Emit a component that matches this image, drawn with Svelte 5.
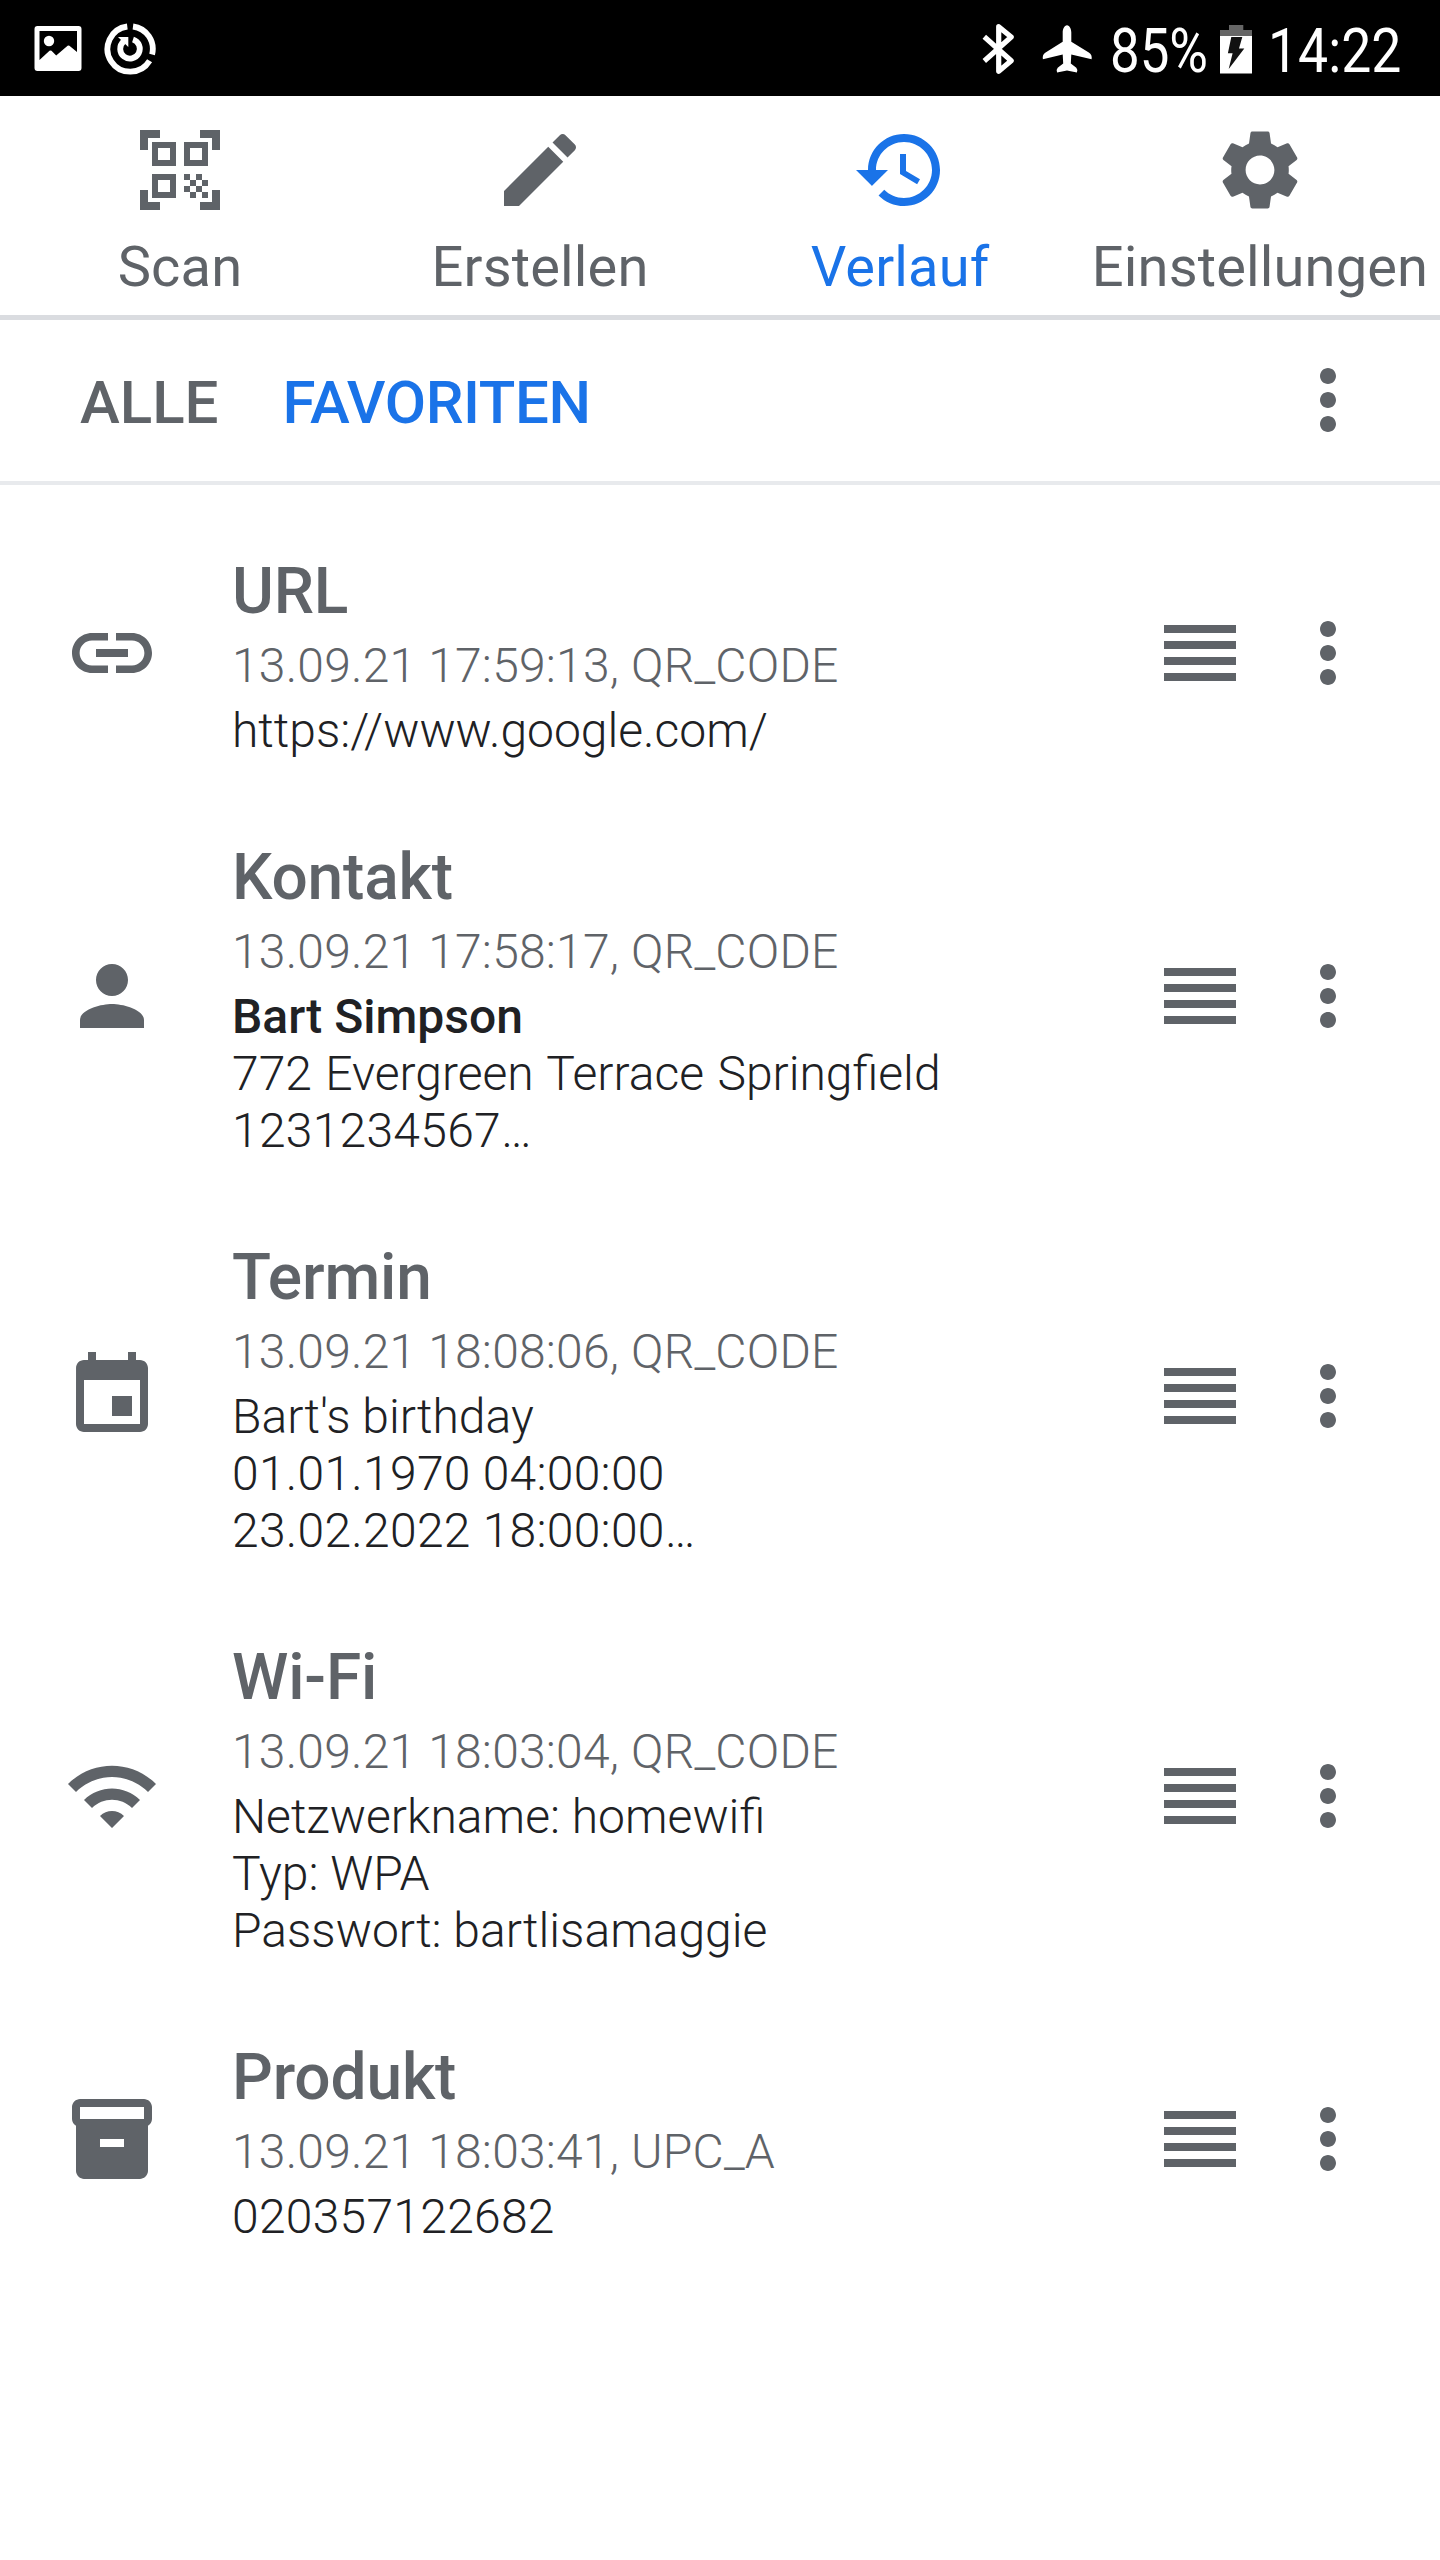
<script>
  const icons = {
    scan: 'M2 2h5v2H4v3H2zM17 2h5v5h-2V4h-3zM2 17h2v3h3v2H2zM20 17h2v5h-5v-2h3zM5 5h6v6H5zM6.5 6.5v3h3v-3zM13 5h6v6h-6zM14.5 6.5v3h3v-3zM5 13h6v6H5zM6.5 14.5v3h3v-3zM13 13h1.5v1.5H13zM16 13h1.5v1.5H16zM14.5 14.5H16V16h-1.5zM17.5 14.5H19V16h-1.5zM13 16h1.5v1.5H13zM16 16h1.5v1.5H16zM14.5 17.5H16V19h-1.5zM17.5 17.5H19V19h-1.5z',
    edit: 'M3 17.25V21h3.75L17.81 9.94l-3.75-3.75L3 17.25zM20.71 7.04c.39-.39.39-1.02 0-1.41l-2.34-2.34c-.39-.39-1.02-.39-1.41 0l-1.83 1.83 3.75 3.75 1.83-1.83z',
    history: 'M13 3c-4.97 0-9 4.03-9 9H1l3.89 3.89.07.14L9 12H6c0-3.87 3.13-7 7-7s7 3.13 7 7-3.13 7-7 7c-1.93 0-3.68-.79-4.94-2.06l-1.42 1.42C8.27 19.99 10.51 21 13 21c4.97 0 9-4.03 9-9s-4.03-9-9-9zm-1 5v5l4.28 2.54.72-1.21-3.5-2.08V8H12z',
    settings: 'M19.14 12.94c.04-.3.06-.61.06-.94 0-.32-.02-.64-.07-.94l2.03-1.58c.18-.14.23-.41.12-.61l-1.92-3.32c-.12-.22-.37-.29-.59-.22l-2.39.96c-.5-.38-1.03-.7-1.62-.94l-.36-2.54c-.04-.24-.24-.41-.48-.41h-3.84c-.24 0-.43.17-.47.41l-.36 2.54c-.59.24-1.13.57-1.62.94l-2.39-.96c-.22-.08-.47 0-.59.22L2.74 8.87c-.12.21-.08.47.12.61l2.03 1.58c-.05.3-.09.63-.09.94s.02.64.07.94l-2.03 1.58c-.18.14-.23.41-.12.61l1.92 3.32c.12.22.37.29.59.22l2.39-.96c.5.38 1.03.7 1.62.94l.36 2.54c.05.24.24.41.48.41h3.84c.24 0 .44-.17.47-.41l.36-2.54c.59-.24 1.13-.56 1.62-.94l2.39.96c.22.08.47 0 .59-.22l1.92-3.32c.12-.22.07-.47-.12-.61l-2.01-1.58zM12 15.6c-1.98 0-3.6-1.62-3.6-3.6s1.62-3.6 3.6-3.6 3.6 1.62 3.6 3.6-1.62 3.6-3.6 3.6z',
    link: 'M3.9 12c0-1.71 1.39-3.1 3.1-3.1h4V7H7c-2.76 0-5 2.24-5 5s2.24 5 5 5h4v-1.9H7c-1.71 0-3.1-1.39-3.1-3.1zM8 13h8v-2H8v2zm9-6h-4v1.9h4c1.71 0 3.1 1.39 3.1 3.1s-1.39 3.1-3.1 3.1h-4V17h4c2.76 0 5-2.24 5-5s-2.24-5-5-5z',
    person: 'M12 12c2.21 0 4-1.79 4-4s-1.79-4-4-4-4 1.79-4 4 1.79 4 4 4zm0 2c-2.67 0-8 1.34-8 4v2h16v-2c0-2.66-5.33-4-8-4z',
    event: 'M17 12h-5v5h5v-5zM16 1v2H8V1H6v2H5c-1.11 0-1.99.9-1.99 2L3 19c0 1.1.89 2 2 2h14c1.1 0 2-.9 2-2V5c0-1.1-.9-2-2-2h-1V1h-2zm3 18H5V8h14v11z',
    wifi: 'M1 9l2 2c4.97-4.97 13.03-4.97 18 0l2-2C16.93 2.93 7.08 2.93 1 9zm8 8l3 3 3-3c-1.65-1.66-4.34-1.66-6 0zm-4-4l2 2c2.76-2.76 7.24-2.76 10 0l2-2C15.14 9.14 8.87 9.14 5 13z',
    product: 'M20 2H4c-1 0-2 .9-2 2v3.01c0 .72.43 1.34 1 1.69V20c0 1.1 1.1 2 2 2h14c.9 0 2-.9 2-2V8.7c.57-.35 1-.97 1-1.69V4c0-1.1-1-2-2-2zm-5 12H9v-2h6v2zm5-7H4V4h16v3z',
    handle: 'M3 5h18v2H3zM3 9h18v2H3zM3 13h18v2H3zM3 17h18v2H3z',
    more: 'M12 8c1.1 0 2-.9 2-2s-.9-2-2-2-2 .9-2 2 .9 2 2 2zm0 2c-1.1 0-2 .9-2 2s.9 2 2 2 2-.9 2-2-.9-2-2-2zm0 6c-1.1 0-2 .9-2 2s.9 2 2 2 2-.9 2-2-.9-2-2-2z',
  };

  const tabs = [
    { label: 'Scan', icon: 'scan' },
    { label: 'Erstellen', icon: 'edit' },
    { label: 'Verlauf', icon: 'history', active: true },
    { label: 'Einstellungen', icon: 'settings' },
  ];

  const entries = [
    { icon: 'link', title: 'URL', meta: '13.09.21 17:59:13, QR_CODE', lines: ['https://www.google.com/'] },
    {
      icon: 'person',
      title: 'Kontakt',
      meta: '13.09.21 17:58:17, QR_CODE',
      name: 'Bart Simpson',
      lines: ['772 Evergreen Terrace Springfield', '1231234567…'],
    },
    {
      icon: 'event',
      title: 'Termin',
      meta: '13.09.21 18:08:06, QR_CODE',
      lines: ["Bart's birthday", '01.01.1970 04:00:00', '23.02.2022 18:00:00…'],
    },
    {
      icon: 'wifi',
      title: 'Wi-Fi',
      meta: '13.09.21 18:03:04, QR_CODE',
      lines: ['Netzwerkname: homewifi', 'Typ: WPA', 'Passwort: bartlisamaggie'],
    },
    { icon: 'product', title: 'Produkt', meta: '13.09.21 18:03:41, UPC_A', lines: ['020357122682'] },
  ];

  const isNumeric = (line) => !/[a-z]/i.test(line);
  const isAddress = (line) => /^\d+ [a-z]/i.test(line);
</script>

{#snippet icon(name)}
  <svg class="icon" viewBox="0 0 24 24" aria-hidden="true"><path fill-rule="evenodd" d={icons[name]} /></svg>
{/snippet}

<div class="screen">
  <header class="status">
    <svg class="picture" viewBox="34 23 49 52" aria-hidden="true">
      <path fill-rule="evenodd" d="M37.500 26h41q3 0 3 3v39q0 3-3 3h-41q-3 0-3-3V29q0-3 3-3zM39.500 31v29l10-9.200q1-.8 2 0l4.700 4.700 11.400-9.700q.9-.8 1.800 0l7.600 6.200V31z" />
      <circle cx="49" cy="41" r="5.200" />
    </svg>
    <svg class="sync" viewBox="104 23 53 52" aria-hidden="true">
      <g fill="none" stroke="#fff" stroke-width="5.800">
        <path d="M127.300 26.500A22.700 22.700 0 1 0 149.600 60.800" />
        <path d="M133 26.500A22.700 22.700 0 0 1 152.100 54.500" />
        <path d="M123.500 41.500A9.800 9.800 0 1 0 133 39.500" />
      </g>
      <path d="M118 37h10.300v10z" />
    </svg>
    <div class="system">
      <svg class="bluetooth" viewBox="980 22 36 54" aria-hidden="true">
        <path fill="none" stroke="#fff" stroke-width="5.200" stroke-linejoin="round" d="M984.300 36.800L1011.200 60.800 998.700 71.300V26.700L1011.200 37 984.300 61" />
      </svg>
      <svg class="plane" viewBox="1040 22 54 54" aria-hidden="true">
        <path d="M1067 25.300c2.700 0 4.300 4 4.300 7.200v9.300l17.500 10.600q3.600 2.300 2.800 6.800l-20.300-4.800-.5 9 5.500 4.300q1.700 1.800.6 4.800l-9.900-1.900-9.900 1.900q-1.100-3 .6-4.800l5.500-4.300-.5-9-19.800 4.800q-.9-4.500 2.700-6.800l17.100-10.600v-9.300c0-3.200 1.600-7.200 4.300-7.200z" />
      </svg>
      <span class="percent">85%</span>
      <svg class="battery" viewBox="1220 24 32 52" aria-hidden="true">
        <path fill="#666" d="M1229 25h14.300v5h8.700v6h-32v-6h9z" />
        <path d="M1220 36h32v37.600h-32z" />
        <path fill="#111" d="M1231.300 37h11l-3.300 11.500h5.300l-15.600 20.500 3.900-15.700h-4.700z" />
      </svg>
      <span class="time">14:22</span>
    </div>
  </header>

  <nav class="tabs">
    {#each tabs as tab}
      <div class="tab" class:active={tab.active}>
        {@render icon(tab.icon)}
        <span>{tab.label}</span>
      </div>
    {/each}
  </nav>

  <div class="filters">
    <span class="filter">ALLE</span>
    <span class="filter active">FAVORITEN</span>
    <div class="menu">{@render icon('more')}</div>
  </div>

  <main class="list">
    {#each entries as entry}
      <article class="entry">
        {@render icon(entry.icon)}
        <div class="text">
          <h2>{entry.title}</h2>
          <p class="meta">{entry.meta}</p>
          <div class="body">
            {#if entry.name}<p class="name">{entry.name}</p>{/if}
            {#each entry.lines as line}
              <p class:numeric={isNumeric(line)} class:address={isAddress(line)}>{line}</p>
            {/each}
          </div>
        </div>
        {@render icon('handle')}
        <div class="menu">{@render icon('more')}</div>
      </article>
    {/each}
  </main>
</div>

<style>
  :global(body) {
    margin: 0;
    background: #fff;
  }

  .screen {
    width: 1440px;
    min-height: 2560px;
    background: #fff;
    color: #5f6368;
    font-family: Roboto, sans-serif;
  }

  .icon {
    display: block;
    flex: none;
    width: 96px;
    height: 96px;
    fill: currentColor;
  }

  .status {
    display: flex;
    align-items: center;
    box-sizing: border-box;
    height: 96px;
    padding: 0 38px 0 34px;
    background: #000;
    color: #fff;
    fill: #fff;
  }

  .status svg {
    display: block;
    flex: none;
  }

  .picture {
    width: 49px;
    height: 52px;
    margin-top: 2px;
  }

  .sync {
    width: 53px;
    height: 52px;
    margin: 2px 0 0 21px;
  }

  .system {
    display: flex;
    align-items: center;
    margin: 2px 0 0 auto;
    font-size: 61px;
    line-height: 70px;
  }

  .bluetooth {
    width: 36px;
    height: 54px;
  }

  .plane {
    width: 54px;
    height: 54px;
    margin-left: 24px;
  }

  .percent,
  .time {
    display: block;
    padding-top: 4px;
    white-space: nowrap;
    transform: scaleX(0.865);
    transform-origin: left;
  }

  .percent {
    width: 98px;
    margin-left: 16px;
  }

  .battery {
    width: 32px;
    height: 52px;
    margin: 2px 0 0 12px;
  }

  .time {
    width: 134px;
    margin-left: 16px;
    transform: scaleX(0.878);
  }

  .tabs {
    display: grid;
    grid-template-columns: repeat(4, 1fr);
    box-sizing: border-box;
    height: 224px;
    padding-top: 26px;
    border-bottom: 5px solid #dadce0;
  }

  .tab {
    display: flex;
    flex-direction: column;
    align-items: center;
    gap: 16px;
    font-size: 56px;
    letter-spacing: 0.15px;
    line-height: 66px;
  }

  .active {
    color: #1a73e8;
  }

  .filters {
    display: flex;
    align-items: center;
    box-sizing: border-box;
    height: 165px;
    padding: 0 64px 1px 80px;
    border-bottom: 4px solid #e8eaed;
    font-size: 60px;
    font-weight: 500;
    line-height: 70px;
  }

  .filter {
    padding-top: 5px;
  }

  .filter + .filter {
    margin-left: 64px;
    letter-spacing: -0.4px;
  }

  .filters .menu {
    margin-left: auto;
  }

  .list {
    padding-top: 25px;
  }

  .entry {
    display: flex;
    align-items: center;
    padding: 0 64px;
  }

  .text {
    flex: 1;
    padding: 44px 0 37px 72px;
    font-size: 48px;
    font-weight: 300;
    line-height: 57px;
  }

  .text p,
  .text h2 {
    margin: 0;
  }

  .text h2 {
    font-size: 64px;
    font-weight: 500;
    letter-spacing: -0.15px;
    line-height: 75px;
  }

  .text .meta {
    margin: 8px 0;
    letter-spacing: 0.2px;
  }

  .body {
    color: #202124;
  }

  .body .name {
    font-weight: 500;
  }

  .body .numeric {
    letter-spacing: 0.27px;
  }

  .body .address {
    word-spacing: 1.7px;
  }

  .entry .menu {
    margin-left: 32px;
  }
</style>
